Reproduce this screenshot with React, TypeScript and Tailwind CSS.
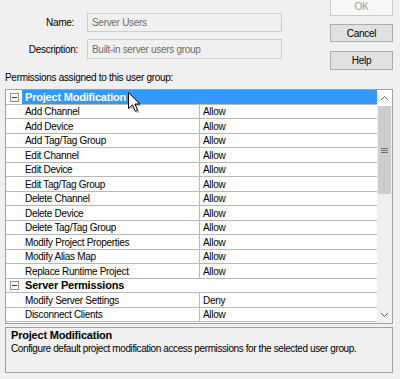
import React from "react";

type Row =
  | { kind: "cat"; name: string; selected?: boolean }
  | { kind: "item"; name: string; value: string };

const rows: Row[] = [
  { kind: "cat", name: "Project Modification", selected: true },
  { kind: "item", name: "Add Channel", value: "Allow" },
  { kind: "item", name: "Add Device", value: "Allow" },
  { kind: "item", name: "Add Tag/Tag Group", value: "Allow" },
  { kind: "item", name: "Edit Channel", value: "Allow" },
  { kind: "item", name: "Edit Device", value: "Allow" },
  { kind: "item", name: "Edit Tag/Tag Group", value: "Allow" },
  { kind: "item", name: "Delete Channel", value: "Allow" },
  { kind: "item", name: "Delete Device", value: "Allow" },
  { kind: "item", name: "Delete Tag/Tag Group", value: "Allow" },
  { kind: "item", name: "Modify Project Properties", value: "Allow" },
  { kind: "item", name: "Modify Alias Map", value: "Allow" },
  { kind: "item", name: "Replace Runtime Project", value: "Allow" },
  { kind: "cat", name: "Server Permissions" },
  { kind: "item", name: "Modify Server Settings", value: "Deny" },
  { kind: "item", name: "Disconnect Clients", value: "Allow" },
];

function MinusBox() {
  return (
    <div className="w-[9px] h-[9px] border border-[#919191] bg-white flex items-center justify-center">
      <div className="w-[5px] h-[1px] bg-[#333]" />
    </div>
  );
}

function Cursor() {
  return (
    <svg
      className="absolute left-[128px] top-[92px]"
      width="14"
      height="22"
      viewBox="0 0 14 22"
    >
      <path
        d="M1.5 2.5 L1.5 17.5 L5 14 L8 20.5 L10.5 19.5 L7.5 13 L12.5 13 Z"
        fill="#000"
        opacity="0.25"
        transform="translate(1 1)"
      />
      <path
        d="M0.5 0.5 L0.5 16.5 L4.5 12.8 L7.3 19.3 L9.6 18.3 L6.9 12 L11.8 12 Z"
        fill="#fff"
        stroke="#000"
        strokeWidth="1"
        strokeLinejoin="miter"
      />
    </svg>
  );
}

export default function App() {
  return (
    <div className="relative w-[400px] h-[379px] overflow-hidden bg-[#f0f0f0] text-black font-['Liberation_Sans',Arial,sans-serif] text-[10px] tracking-[-0.3px]">
      {/* top area */}
      <div className="flex h-[70px]">
        <div className="w-[330px] pt-[13px] flex flex-col gap-[7px]">
          <div className="flex items-center h-[19px]">
            <div className="w-[87px] text-right pr-[13px]">Name:</div>
            <div className="w-[195px] h-full border border-[#cccccc] bg-[#f0f0f0] text-[#6d6d6d] pl-[4px] flex items-center">
              Server Users
            </div>
          </div>
          <div className="flex items-center h-[20px]">
            <div className="w-[87px] text-right pr-[9px]">Description:</div>
            <div className="w-[195px] h-full border border-[#cccccc] bg-[#f0f0f0] text-[#6d6d6d] pl-[4px] flex items-center">
              Built-in server users group
            </div>
          </div>
        </div>
        <div className="w-[63px] -mt-[3px] flex flex-col">
          <div className="h-[19px] border border-[#cccccc] bg-[#f7f7f7] text-[#a0a0a0] flex items-center justify-center">
            OK
          </div>
          <div className="mt-[8px] h-[19px] border border-[#adadad] bg-[#e1e1e1] flex items-center justify-center">
            Cancel
          </div>
          <div className="mt-[9px] h-[19px] border border-[#adadad] bg-[#e1e1e1] flex items-center justify-center">
            Help
          </div>
        </div>
      </div>

      <div className="mt-[1px] pl-[5px] h-[13px] leading-[13px]">
        Permissions assigned to this user group:
      </div>

      {/* grid */}
      <div className="mt-[5px] ml-[5px] w-[388px] h-[235px] border border-[#a0a0a0] bg-white flex">
        <div className="w-[371px] flex flex-col">
          {rows.map((r, i) => {
            const h = i % 2 === 0 ? "h-[15px]" : "h-[14px]";
            if (r.kind === "cat") {
              return (
                <div
                  key={i}
                  className={`${h} flex border-b border-[#b8b8b8] shrink-0`}
                >
                  <div className="w-[16px] flex items-center justify-center pl-[1px]">
                    <MinusBox />
                  </div>
                  <div
                    className={`flex-1 pl-[3px] flex items-center font-bold text-[11px] tracking-[-0.2px] ${
                      r.selected ? "bg-[#3399ff] text-white" : "text-black"
                    }`}
                  >
                    {r.name}
                  </div>
                </div>
              );
            }
            return (
              <div
                key={i}
                className={`${h} flex border-b border-[#b8b8b8] shrink-0`}
              >
                <div className="w-[16px]" />
                <div className="w-[178px] pl-[3px] border-r border-[#b8b8b8] flex items-center whitespace-nowrap">
                  {r.name}
                </div>
                <div className="flex-1 pl-[3px] flex items-center">{r.value}</div>
              </div>
            );
          })}
        </div>
        {/* scrollbar */}
        <div className="w-[15px] bg-[#f0f0f0] flex flex-col">
          <div className="h-[16px] bg-white flex items-center justify-center">
            <svg width="9" height="6" viewBox="0 0 9 6">
              <path d="M1 5 L4.5 1.5 L8 5" fill="none" stroke="#606060" strokeWidth="1" />
            </svg>
          </div>
          <div className="mx-[1px] h-[88px] bg-[#cdcdcd] flex items-center justify-center">
            <div className="flex flex-col gap-[1px]">
              <div className="w-[7px] h-[1px] bg-[#707070]" />
              <div className="w-[7px] h-[1px] bg-[#707070]" />
              <div className="w-[7px] h-[1px] bg-[#707070]" />
            </div>
          </div>
          <div className="flex-1" />
          <div className="h-[16px] flex items-center justify-center">
            <svg width="9" height="6" viewBox="0 0 9 6">
              <path d="M1 1 L4.5 4.5 L8 1" fill="none" stroke="#606060" strokeWidth="1" />
            </svg>
          </div>
        </div>
      </div>

      {/* description panel */}
      <div className="mt-[3px] ml-[5px] w-[388px] h-[46px] border border-[#a0a0a0] bg-[#f0f0f0] px-[5px] pt-[1px]">
        <div className="h-[13px] leading-[13px] font-bold text-[11px] tracking-[-0.2px]">
          Project Modification
        </div>
        <div className="h-[13px] leading-[13px] whitespace-nowrap tracking-[-0.4px]">
          Configure default project modification access permissions for the selected user group.
        </div>
      </div>

      <Cursor />
    </div>
  );
}
